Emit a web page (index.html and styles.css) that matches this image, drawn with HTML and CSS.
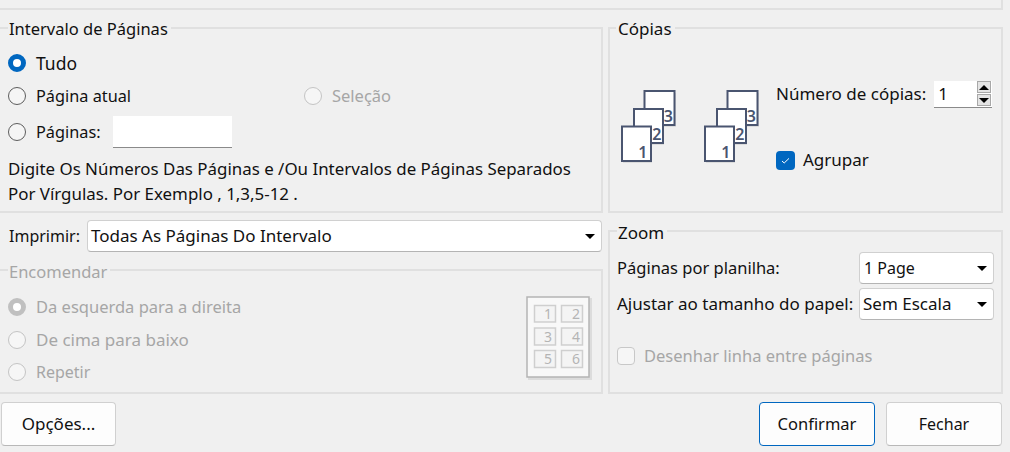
FILE: index.html
```html
<!DOCTYPE html>
<html lang="pt">
<head>
<meta charset="utf-8">
<title>Imprimir</title>
<link rel="stylesheet" href="styles.css">
</head>
<body>
<div class="top-panel"></div>
<div class="columns">
  <div class="col-left">
    <fieldset class="group range">
      <legend class="fs-m">Intervalo de Páginas</legend>
      <div class="row r1"><span class="radio on"></span><span class="lbl fs-l">Tudo</span></div>
      <div class="row r2">
        <span class="radio"></span><span class="lbl current fs-t">Página atual</span>
        <span class="selection"><span class="radio off"></span><span class="lbl dim fs-m">Seleção</span></span>
      </div>
      <div class="row r3"><span class="radio"></span><span class="lbl fs-t">Páginas:</span><span class="pages-input"></span></div>
      <p class="hint">Digite Os Números Das Páginas e /Ou Intervalos de Páginas Separados<br>Por Vírgulas. Por Exemplo , 1,3,5-12 .</p>
    </fieldset>
    <div class="print-row">
      <span class="print-label fs-s">Imprimir:</span>
      <div class="select wide"><span>Todas As Páginas Do Intervalo</span><i class="caret"></i></div>
    </div>
    <fieldset class="group order">
      <legend class="dim fs-m low">Encomendar</legend>
      <div class="order-body">
        <div class="order-list">
          <div class="row o"><span class="radio off-on"></span><span class="lbl dim fs-m">Da esquerda para a direita</span></div>
          <div class="row o"><span class="radio off"></span><span class="lbl dim">De cima para baixo</span></div>
          <div class="row o"><span class="radio off"></span><span class="lbl dim fs-s">Repetir</span></div>
        </div>
        <svg class="preview" width="66" height="84" viewBox="0 0 66 84">
          <rect x="2" y="2" width="64" height="82" fill="#dcdcdc"/>
          <rect x="1" y="1" width="62" height="80" fill="#f8f8f8" stroke="#b4b4b4" stroke-width="1.5"/>
          <g fill="#f4f4f4" stroke="#cfcfcf" stroke-width="1.5">
            <rect x="8.5" y="9.5" width="21" height="16.5"/><rect x="35.5" y="9.5" width="21" height="16.5"/>
            <rect x="8.5" y="32" width="21" height="17"/><rect x="35.5" y="32" width="21" height="17"/>
            <rect x="8.5" y="54.5" width="21" height="17"/><rect x="35.5" y="54.5" width="21" height="17"/>
          </g>
          <g class="pv-num" text-anchor="end">
            <text x="26" y="22.5">1</text><text x="54" y="22.5">2</text>
            <text x="26" y="45.5">3</text><text x="54" y="45.5">4</text>
            <text x="26" y="68">5</text><text x="54" y="68">6</text>
          </g>
        </svg>
      </div>
    </fieldset>
  </div>
  <div class="col-right">
    <fieldset class="group copies">
      <legend>Cópias</legend>
      <div class="copies-body">
        <svg class="stack" width="56" height="74" viewBox="0 0 56 74">
          <defs>
            <g id="pages">
              <rect x="25" y="3" width="30" height="34" fill="#dcdcdc"/>
              <rect x="23.5" y="1" width="30" height="34" fill="#fff" stroke="#4a5570" stroke-width="2"/>
              <text class="pg" x="52" y="32" text-anchor="end">3</text>
              <rect x="14" y="21" width="29" height="34" fill="#dcdcdc"/>
              <rect x="13" y="19" width="29" height="34" fill="#fff" stroke="#4a5570" stroke-width="2"/>
              <text class="pg" x="40.5" y="49.5" text-anchor="end">2</text>
              <rect x="2" y="39" width="29" height="34" fill="#dcdcdc"/>
              <rect x="1" y="36.5" width="29" height="34.5" fill="#fff" stroke="#4a5570" stroke-width="2"/>
              <text class="pg" x="26.5" y="67.5" text-anchor="end">1</text>
            </g>
          </defs>
          <use href="#pages"/>
        </svg>
        <svg class="stack second" width="56" height="74" viewBox="0 0 56 74"><use href="#pages"/></svg>
        <div class="copies-side">
          <div class="copies-count">
            <span class="lbl">Número de cópias:</span>
            <div class="spin">
              <span class="spin-val">1</span>
              <span class="spin-btns">
                <span class="spin-btn"><i class="tri up"></i></span>
                <span class="spin-btn"><i class="tri down"></i></span>
              </span>
            </div>
          </div>
          <div class="collate">
            <span class="check on">
              <svg width="19" height="19" viewBox="0 0 19 19"><path d="M6 10l2.2 2 4.8-4.6" fill="none" stroke="#fff" stroke-width="1"/></svg>
            </span>
            <span class="lbl">Agrupar</span>
          </div>
        </div>
      </div>
    </fieldset>
    <fieldset class="group zoom">
      <legend class="low">Zoom</legend>
      <div class="zoom-row z1"><span class="zoom-label fs-m">Páginas por planilha:</span><div class="select small"><span class="ind fs-s">1 Page</span><i class="caret"></i></div></div>
      <div class="zoom-row z2"><span class="zoom-label">Ajustar ao tamanho do papel:</span><div class="select small"><span>Sem Escala</span><i class="caret"></i></div></div>
      <div class="draw-line"><span class="check off"></span><span class="lbl dim fs-m">Desenhar linha entre páginas</span></div>
    </fieldset>
  </div>
</div>
<div class="footer">
  <button class="btn fs-b">Opções...</button>
  <div class="footer-right">
    <button class="btn primary fs-m">Confirmar</button>
    <button class="btn fs-s">Fechar</button>
  </div>
</div>
</body>
</html>
```
FILE: styles.css
```css
* { box-sizing: border-box; }
html, body { margin: 0; padding: 0; }
body {
  width: 1010px;
  height: 452px;
  overflow: hidden;
  background: #f0f0f0;
  color: #111;
  font-family: "Noto Sans", "Open Sans", sans-serif;
  font-size: 17px;
  line-height: 22px;
}
.fs-s { font-size: 16px; }
.fs-t { font-size: 16.3px; }
.fs-m { font-size: 16.5px; }
.fs-b { font-size: 17px; }
.fs-l { font-size: 17.5px; }

.top-panel {
  width: 1003px;
  height: 10px;
  border-right: 2px solid #e0e0e0;
  border-bottom: 2px solid #e0e0e0;
}
.columns {
  display: flex;
  gap: 5px;
  width: 1003px;
  height: 391px;
  padding-top: 7px;
}
.col-left { width: 603px; display: flex; flex-direction: column; }
.col-right { width: 395px; display: flex; flex-direction: column; }

.group {
  margin: 0;
  padding: 0;
  border: 2px solid #e0e0e0;
  min-width: 0;
}
.group legend {
  padding: 1px 3px 0 1px;
  margin-left: 0;
  line-height: 22px;
  height: 22px;
}
.group legend.low { padding-top: 2px; }
.range { height: 196px; border-left: none; padding: 0 0 0 8px; }
.order { height: 135px; border-left: none; padding-left: 8px; margin-top: 7px; }

.row { display: flex; align-items: center; height: 32px; }
.r1 { margin-top: 8px; }
.r2 { margin-top: 1px; }
.r3 { margin-top: 4px; }
.lbl { white-space: nowrap; }
.dim { color: #a6a6a6; }
.radio {
  flex: none;
  width: 18px;
  height: 18px;
  margin-right: 10px;
  border-radius: 50%;
  border: 1.5px solid #5d5d5d;
  background: #f5f5f5;
}
.radio.on { border: 5.5px solid #0067c0; background: #fff; }
.radio.off { border-color: #c4c4c4; background: #f6f6f6; }
.radio.off-on { border: 5.5px solid #c0c0c0; background: #fff; }
.current { width: 95px; }
.selection { display: flex; align-items: center; margin-left: 173px; }
.pages-input {
  width: 119px;
  height: 32px;
  margin-left: 12px;
  background: #fff;
  border-bottom: 1px solid #8a8a8a;
}
.hint { margin: 8px 0 0; font-size: 16.9px; line-height: 25px; white-space: nowrap; }

.print-row { display: flex; align-items: center; height: 32px; margin-top: 7px; padding-left: 9px; }
.print-label { width: 78px; flex: none; }
.select {
  display: flex;
  align-items: center;
  justify-content: space-between;
  height: 32px;
  background: #fff;
  border: 1px solid #d0d0d0;
  border-bottom-color: #b4b4b4;
  border-radius: 4px;
  padding: 0 6px 0 3px;
}
.select.wide { width: 515px; }
.select.small { width: 135px; }
.select .ind { padding-left: 1px; }
.caret {
  width: 0;
  height: 0;
  border-left: 5px solid transparent;
  border-right: 5px solid transparent;
  border-top: 5px solid #000;
}

.order-body { display: flex; justify-content: space-between; padding-right: 9px; }
.order-list { margin-top: 10px; }
.order-list .o { height: 32.5px; }
.preview { margin-top: 15px; }
.pv-num { font-size: 14px; fill: #b4b4b4; }

.copies { height: 196px; padding: 0; }
.copies .copies-body { display: flex; padding: 51px 0 0 11px; height: 170px; }
.copies legend { margin-left: 6px; padding: 1px 3px 0 2px; }
.stack { overflow: visible; flex: none; }
.stack.second { margin-left: 27px; }
.pg { font-size: 16px; font-weight: 600; fill: #4a5570; }
.copies-side { margin-left: 16px; margin-top: -11px; }
.copies-count { display: flex; align-items: center; height: 30px; }
.spin {
  display: flex;
  align-items: center;
  justify-content: space-between;
  width: 58px;
  height: 27px;
  margin-left: 8px;
  background: #fff;
  border-bottom: 1px solid #8a8a8a;
  padding: 0 1px 0 4px;
}
.spin-val { font-size: 17px; }
.spin-btns { display: flex; flex-direction: column; gap: 1px; }
.spin-btn {
  display: flex;
  align-items: center;
  justify-content: center;
  width: 14px;
  height: 12px;
  background: #e4e4e4;
  border: 1px solid #a8a8a8;
}
.tri { width: 0; height: 0; border-left: 5px solid transparent; border-right: 5px solid transparent; }
.tri.up { border-bottom: 5px solid #000; }
.tri.down { border-top: 5px solid #000; }
.collate { display: flex; align-items: center; margin-top: 40px; }
.check {
  flex: none;
  display: block;
  width: 19px;
  height: 19px;
  margin-right: 8px;
  border-radius: 4px;
}
.check svg { display: block; }
.check.on { background: #0067c0; }
.check.off { width: 18px; height: 18px; margin-right: 9px; background: #f6f6f6; border: 1px solid #c8c8c8; }

.zoom { height: 174px; margin-top: 7px; padding: 0 0 0 7px; }
.zoom-row { display: flex; align-items: center; justify-content: space-between; width: 377px; height: 32px; }
.z1 { margin-top: 10px; }
.z2 { margin-top: 4px; }
.zoom-label { white-space: nowrap; }
.draw-line { display: flex; align-items: center; margin-top: 25px; }

.footer {
  display: flex;
  justify-content: space-between;
  width: 1002px;
  margin-top: 1px;
  padding-left: 1px;
}
.footer-right { display: flex; gap: 11px; }
.btn {
  width: 115px;
  height: 44px;
  padding: 0;
  font-family: inherit;
  line-height: inherit;
  color: #111;
  background: #fdfdfd;
  border: 1px solid #d0d0d0;
  border-bottom-color: #b8b8b8;
  border-radius: 4px;
}
.btn.primary { width: 116px; border: 1px solid #0067c0; }
.footer-right .btn:last-child { width: 116px; }
```
